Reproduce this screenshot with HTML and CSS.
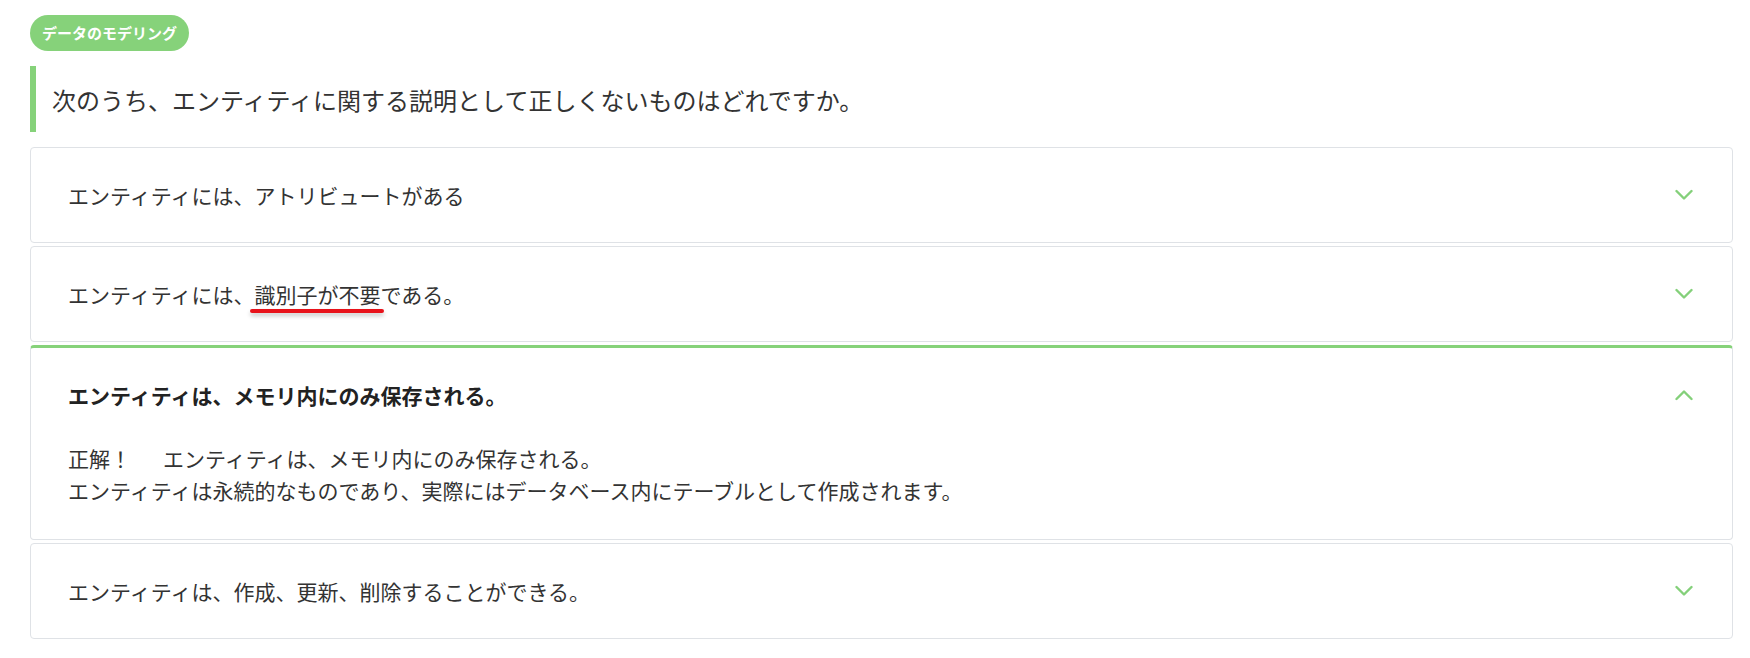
FILE: index.html
```html
<!DOCTYPE html>
<html lang="ja">
<head>
<meta charset="utf-8">
<title>データのモデリング</title>
<link rel="stylesheet" href="styles.css">
</head>
<body>
<div class="page">
  <div class="badge-row"><span class="badge">データのモデリング</span></div>
  <div class="question">次のうち、エンティティに関する説明として正しくないものはどれですか。</div>
  <div class="choices">
    <div class="card">
      <div class="card-head">
        <span class="choice-text">エンティティには、アトリビュートがある</span>
        <svg class="chev" width="18" height="12" viewBox="0 0 18 12"><polyline points="1.5,2 9,9.5 16.5,2" fill="none" stroke="#84d07a" stroke-width="2.4" stroke-linecap="round" stroke-linejoin="round"/></svg>
      </div>
    </div>
    <div class="card">
      <div class="card-head">
        <span class="choice-text">エンティティには、<span class="mark">識別子が不要</span>である。</span>
        <svg class="chev" width="18" height="12" viewBox="0 0 18 12"><polyline points="1.5,2 9,9.5 16.5,2" fill="none" stroke="#84d07a" stroke-width="2.4" stroke-linecap="round" stroke-linejoin="round"/></svg>
      </div>
    </div>
    <div class="card open">
      <div class="card-head">
        <span class="choice-text strong">エンティティは、メモリ内にのみ保存される。</span>
        <svg class="chev" width="18" height="12" viewBox="0 0 18 12"><polyline points="1.5,10 9,2.5 16.5,10" fill="none" stroke="#84d07a" stroke-width="2.4" stroke-linecap="round" stroke-linejoin="round"/></svg>
      </div>
      <div class="answer">
        <div><span class="verdict">正解！</span>エンティティは、メモリ内にのみ保存される。</div>
        <div>エンティティは永続的なものであり、実際にはデータベース内にテーブルとして作成されます。</div>
      </div>
    </div>
    <div class="card">
      <div class="card-head">
        <span class="choice-text">エンティティは、作成、更新、削除することができる。</span>
        <svg class="chev" width="18" height="12" viewBox="0 0 18 12"><polyline points="1.5,2 9,9.5 16.5,2" fill="none" stroke="#84d07a" stroke-width="2.4" stroke-linecap="round" stroke-linejoin="round"/></svg>
      </div>
    </div>
  </div>
</div>
</body>
</html>
```

FILE: styles.css
```css
html, body {
  margin: 0;
  padding: 0;
  background: #ffffff;
}

body {
  font-family: "Noto Sans CJK JP", "Noto Sans", sans-serif;
  color: #333333;
}

.page {
  padding: 15px 17px 0 30px;
}

.badge-row {
  display: flex;
}

.badge {
  display: inline-block;
  height: 36px;
  line-height: 36px;
  padding: 0 12px;
  border-radius: 18px;
  background: #86d27a;
  color: #ffffff;
  font-weight: bold;
  font-size: 15px;
}

.question {
  margin-top: 15px;
  height: 66px;
  display: flex;
  align-items: center;
  border-left: 6px solid #86d27a;
  padding-left: 16px;
  font-size: 24px;
  color: #333333;
}

.choices {
  margin-top: 15px;
  display: flex;
  flex-direction: column;
  gap: 3px;
}

.card {
  border: 1px solid #dfe2e6;
  border-radius: 4px;
  background: #ffffff;
}

.card.open {
  border-top: 3px solid #86d27a;
}

.card-head {
  display: flex;
  align-items: center;
  justify-content: space-between;
  padding: 31px 39px 31px 37px;
  height: 32px;
}

.choice-text {
  font-size: 21px;
  line-height: 32px;
  color: #333333;
}

.choice-text.strong {
  font-weight: bold;
  color: #222222;
}

.chev {
  display: block;
  flex: none;
}

.mark {
  position: relative;
}

.mark::after {
  content: "";
  position: absolute;
  left: -4px;
  right: -4px;
  bottom: -4px;
  height: 4px;
  border-radius: 2px;
  background: #e8121a;
  box-shadow: 0 3px 4px rgba(0, 0, 0, 0.22);
}

.answer {
  padding: 0 39px 33px 37px;
  font-size: 21px;
  line-height: 32px;
  color: #333333;
}

.verdict {
  display: inline-block;
  margin-right: 32px;
}
```
